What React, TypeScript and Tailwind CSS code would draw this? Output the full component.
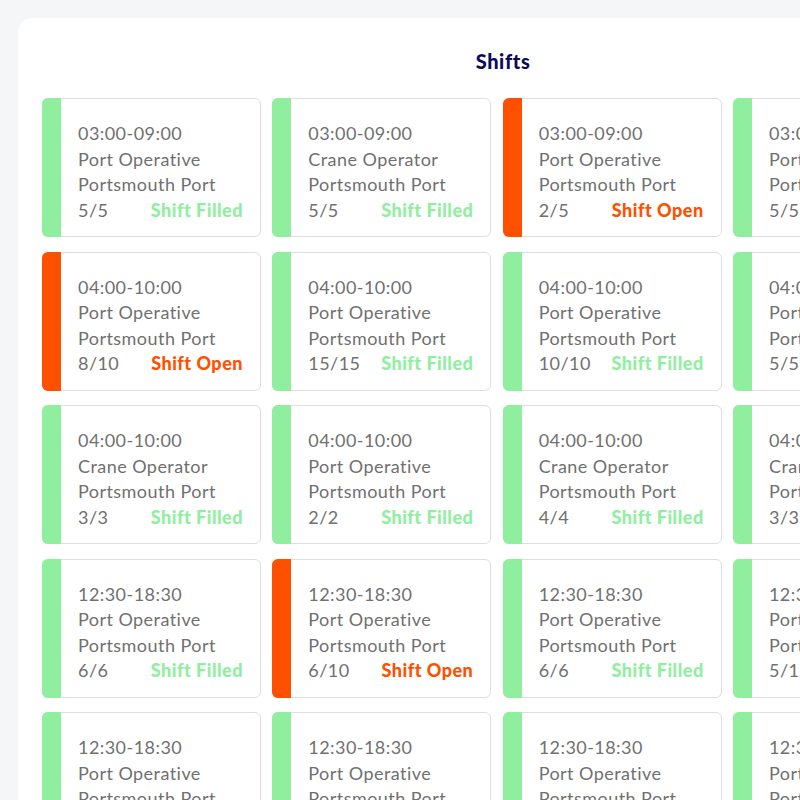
type Shift = {
  time: string;
  role: string;
  filled: number;
  total: number;
};

const rows: Shift[][] = [
  [
    { time: "03:00-09:00", role: "Port Operative", filled: 5, total: 5 },
    { time: "03:00-09:00", role: "Crane Operator", filled: 5, total: 5 },
    { time: "03:00-09:00", role: "Port Operative", filled: 2, total: 5 },
    { time: "03:00-09:00", role: "Port Operative", filled: 5, total: 5 },
  ],
  [
    { time: "04:00-10:00", role: "Port Operative", filled: 8, total: 10 },
    { time: "04:00-10:00", role: "Port Operative", filled: 15, total: 15 },
    { time: "04:00-10:00", role: "Port Operative", filled: 10, total: 10 },
    { time: "04:00-10:00", role: "Port Operative", filled: 5, total: 5 },
  ],
  [
    { time: "04:00-10:00", role: "Crane Operator", filled: 3, total: 3 },
    { time: "04:00-10:00", role: "Port Operative", filled: 2, total: 2 },
    { time: "04:00-10:00", role: "Crane Operator", filled: 4, total: 4 },
    { time: "04:00-10:00", role: "Crane Operator", filled: 3, total: 3 },
  ],
  [
    { time: "12:30-18:30", role: "Port Operative", filled: 6, total: 6 },
    { time: "12:30-18:30", role: "Port Operative", filled: 6, total: 10 },
    { time: "12:30-18:30", role: "Port Operative", filled: 6, total: 6 },
    { time: "12:30-18:30", role: "Port Operative", filled: 5, total: 15 },
  ],
  [
    { time: "12:30-18:30", role: "Port Operative", filled: 4, total: 4 },
    { time: "12:30-18:30", role: "Port Operative", filled: 8, total: 8 },
    { time: "12:30-18:30", role: "Port Operative", filled: 5, total: 5 },
    { time: "12:30-18:30", role: "Port Operative", filled: 2, total: 2 },
  ],
];

// the last column in the screenshot shows a green bar even when part-filled
function ShiftCard({ shift, forceGreen }: { shift: Shift; forceGreen?: boolean }) {
  const open = shift.filled < shift.total && !forceGreen;
  return (
    <div className="flex w-[219px] h-[139px] shrink-0 rounded-[6px] border border-[#dedede] bg-white">
      <div
        className={
          open
            ? "w-[19px] shrink-0 -my-px -ml-px rounded-l-[6px] bg-[#ff5000]"
            : "w-[19px] shrink-0 -my-px -ml-px rounded-l-[6px] bg-[#90ee9f]"
        }
      />
      <div className="flex-1 pl-[17px] pr-[17px] pt-[22px] text-[18px] leading-[25.5px] tracking-[0.45px] text-[#707070]">
        <div>{shift.time}</div>
        <div>{shift.role}</div>
        <div>Portsmouth Port</div>
        <div className="flex justify-between">
          <span>
            {shift.filled}/{shift.total}
          </span>
          <span
            className={
              open
                ? "font-black tracking-[0.5px] text-[#ff5000]"
                : "font-black tracking-[0.5px] text-[#90ee9f]"
            }
          >
            {open ? "Shift Open" : "Shift Filled"}
          </span>
        </div>
      </div>
    </div>
  );
}

export default function App() {
  return (
    <div className="h-screen w-full overflow-hidden bg-[#f5f6f8] pl-[18px] pt-[18px] font-['Lato',sans-serif]">
      <div className="w-[970px] min-h-[900px] rounded-[14px] bg-white px-[24px] pt-[29px]">
        <h1 className="text-center text-[20px] leading-[28px] font-black tracking-[0.6px] text-[#0b0b5c]">
          Shifts
        </h1>
        <div className="mt-[23px] flex flex-col gap-y-[14.5px]">
          {rows.map((row, i) => (
            <div key={i} className="flex gap-x-[11.33px]">
              {row.map((s, j) => (
                <ShiftCard key={j} shift={s} forceGreen={j === 3} />
              ))}
            </div>
          ))}
        </div>
      </div>
    </div>
  );
}
